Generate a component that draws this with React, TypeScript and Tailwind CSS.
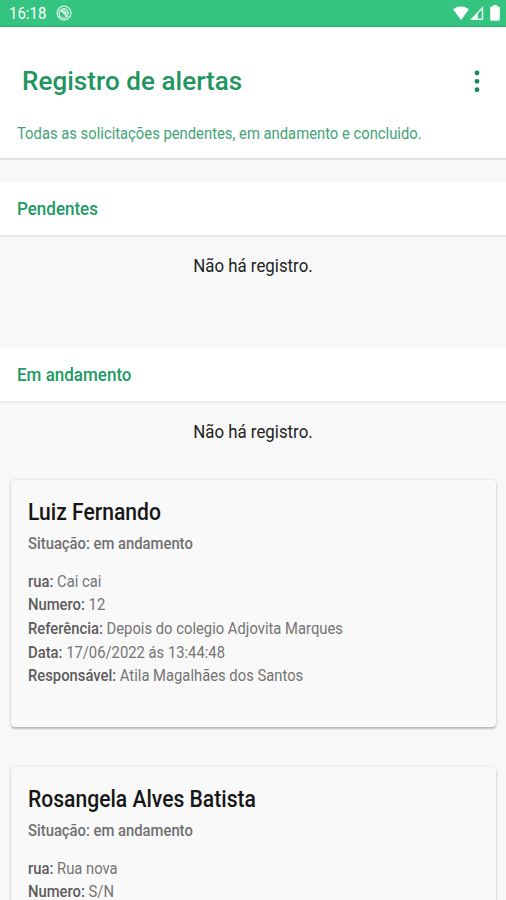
type Alerta = {
    nome: string
    situacao: string
    dados: { label: string; valor: string }[]
}

const alertas: Alerta[] = [
    {
        nome: 'Luiz Fernando',
        situacao: 'em andamento',
        dados: [
            { label: 'rua:', valor: 'Cai cai' },
            { label: 'Numero:', valor: '12' },
            { label: 'Referência:', valor: 'Depois do colegio Adjovita Marques' },
            { label: 'Data:', valor: '17/06/2022 ás 13:44:48' },
            { label: 'Responsável:', valor: 'Atila Magalhães dos Santos' },
        ],
    },
    {
        nome: 'Rosangela Alves Batista',
        situacao: 'em andamento',
        dados: [
            { label: 'rua:', valor: 'Rua nova' },
            { label: 'Numero:', valor: 'S/N' },
        ],
    },
]

const StatusBar = () => {
    return (
        <div className="flex h-[27px] shrink-0 items-center border-b border-[#22ae6b] bg-[#34c47f] pl-[9px] pr-[6px] text-white">
            <span className="mt-[2px] w-[37px] scale-y-[1.08] text-[15px] leading-none">16:18</span>
            <svg viewBox="0 0 16 16" className="ml-[10px] size-4" fill="none" stroke="#d9f5e6">
                <circle cx="8" cy="8" r="6.900" strokeWidth="1.300" />
                <path d="M4.500 5.500a4.300 4.300 0 006 6.200M6 4.300a4.300 4.300 0 016 5.200" strokeWidth="1.300" />
                <path d="M4.300 4.300l7.600 7.600M7.300 5.600l3.400 3" strokeWidth="1.900" />
            </svg>

            <div className="ml-auto flex items-center">
                <svg viewBox="0 0 16 14" className="h-[14px] w-4" fill="white">
                    <path d="M8 14L0.200 3.600C2.400 1.600 5 .400 8 .400s5.600 1.200 7.800 3.200z" />
                </svg>
                <svg viewBox="0 0 14 14" className="ml-[1px] mr-[1px] h-[14px] w-[14px]">
                    <path d="M12.500 1.800V13.200H1.800z" fill="none" stroke="#e6f8ee" strokeWidth="1.500" />
                    <path d="M8 6V13.300H1.200z" fill="#e6f8ee" />
                </svg>
                <svg viewBox="0 0 10 16" className="ml-[5px] h-4 w-[10px]" fill="white">
                    <path d="M3 0h4v1.500h1.500a1.300 1.300 0 011.300 1.300v11.700A1.300 1.300 0 018.500 15.800h-7A1.300 1.300 0 01.2 14.500V2.800A1.300 1.300 0 011.500 1.500H3z" />
                </svg>
            </div>
        </div>
    )
}

const Header = () => {
    return (
        <header className="flex h-[133px] shrink-0 flex-col border-b-2 border-[#e3e3e3] bg-white text-[#1f955f]">
            <div className="mt-9 flex h-9 items-center justify-between pl-[22px] pr-[26px]">
                <h1 className="text-[26px] font-medium leading-9 tracking-[0.050px]">Registro de alertas</h1>
                <svg viewBox="0 0 6 24" className="h-6 w-[6px]" fill="#168957">
                    <circle cx="3" cy="4" r="2.400" />
                    <circle cx="3" cy="12.300" r="2.400" />
                    <circle cx="3" cy="20.700" r="2.400" />
                </svg>
            </div>
            <p className="mt-[22px] scale-y-[1.12] pl-[17px] text-[14.800px] leading-6 text-[#43a377]">
                Todas as solicitações pendentes, em andamento e concluido.
            </p>
        </header>
    )
}

const Secao = ({ titulo }: { titulo: string }) => {
    return (
        <section className="flex shrink-0 flex-col">
            <div className="h-[55px] border-b-2 border-[#eaeaea] bg-white pl-[17px]">
                <h2 className="scale-y-[1.04] text-[17px] font-medium leading-[55px] text-[#219a63]">
                    {titulo}
                </h2>
            </div>
            <p className="mb-[1.500px] mt-[15.500px] scale-y-[1.09] text-center text-[16.850px] leading-6 text-[#222222]">
                Não há registro.
            </p>
        </section>
    )
}

const Card = ({ alerta }: { alerta: Alerta }) => {
    return (
        <article className="ml-[11px] mr-[10px] h-[247px] shrink-0 rounded-[4px] bg-[#f9f9f9] px-[17px] pt-4 text-[14.800px] text-[#747474] shadow-[0_2px_2px_rgba(0,0,0,0.22),0_0_3px_rgba(0,0,0,0.14)]">
            <h3 className="scale-y-[1.12] text-[21.100px] font-medium leading-8 text-[#161616]">{alerta.nome}</h3>
            <p className="mt-[2.500px] scale-y-[1.12] font-medium leading-6 text-[#707070]">Situação: {alerta.situacao}</p>
            <div className="mt-4">
                {alerta.dados.map((d) => (
                    <p key={d.label} className="scale-y-[1.12] leading-[23.700px]">
                        <span className="font-medium text-[#5c5c5c]">{d.label}</span> {d.valor}
                    </p>
                ))}
            </div>
        </article>
    )
}

const App = () => {
    return (
        <div className="flex h-[900px] w-[506px] flex-col overflow-hidden bg-[#f8f8f8] font-['Roboto',sans-serif]">
            <StatusBar />
            <Header />
            <div className="mt-[22px] flex flex-col gap-[70px]">
                <Secao titulo="Pendentes" />
                <Secao titulo="Em andamento" />
            </div>
            <div className="mt-9 flex flex-col gap-10">
                {alertas.map((a) => (
                    <Card key={a.nome} alerta={a} />
                ))}
            </div>
        </div>
    )
}

export default App
